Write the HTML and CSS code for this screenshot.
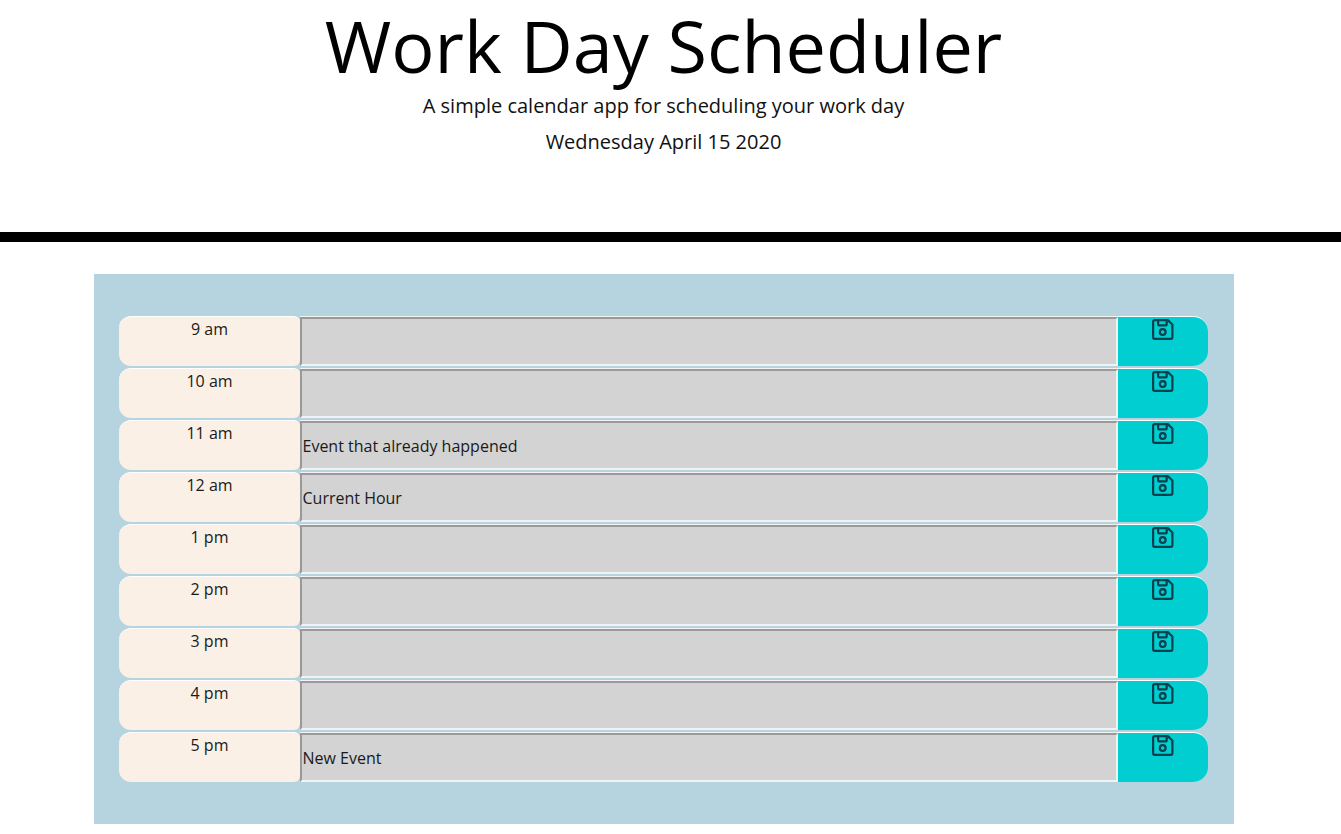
FILE: index.html
```html
<!DOCTYPE html>
<html lang="en">
<head>
<meta charset="utf-8">
<title>Work Day Scheduler</title>
<link rel="stylesheet" href="styles.css">
</head>
<body>
<svg class="defs" width="0" height="0" aria-hidden="true">
  <symbol id="save" viewBox="0 0 24 24">
    <path d="M3 4.5A1.5 1.5 0 0 1 4.5 3h12.6l4.4 4.2V19.5a1.5 1.5 0 0 1-1.5 1.5H4.5A1.5 1.5 0 0 1 3 19.5z" fill="none" stroke="currentColor" stroke-width="2.1" stroke-linejoin="round"/>
    <path d="M7.8 3v4.2a.8.8 0 0 0 .8.8h6.6a.8.8 0 0 0 .8-.8V3" fill="none" stroke="currentColor" stroke-width="2.1"/>
    <circle cx="12.2" cy="14.5" r="2.8" fill="none" stroke="currentColor" stroke-width="2.1"/>
  </symbol>
</svg>
<header class="jumbotron">
  <h1 class="title">Work Day Scheduler</h1>
  <p class="lead">A simple calendar app for scheduling your work day</p>
  <p class="lead date">Wednesday April 15 2020</p>
</header>
<main class="planner">
  <div class="row"><div class="hour">9 am</div><textarea class="event"></textarea><button class="save" aria-label="Save"><svg class="icon"><use href="#save"/></svg></button></div>
  <div class="row"><div class="hour">10 am</div><textarea class="event"></textarea><button class="save" aria-label="Save"><svg class="icon"><use href="#save"/></svg></button></div>
  <div class="row"><div class="hour">11 am</div><textarea class="event">Event that already happened</textarea><button class="save" aria-label="Save"><svg class="icon"><use href="#save"/></svg></button></div>
  <div class="row"><div class="hour">12 am</div><textarea class="event">Current Hour</textarea><button class="save" aria-label="Save"><svg class="icon"><use href="#save"/></svg></button></div>
  <div class="row"><div class="hour">1 pm</div><textarea class="event"></textarea><button class="save" aria-label="Save"><svg class="icon"><use href="#save"/></svg></button></div>
  <div class="row"><div class="hour">2 pm</div><textarea class="event"></textarea><button class="save" aria-label="Save"><svg class="icon"><use href="#save"/></svg></button></div>
  <div class="row"><div class="hour">3 pm</div><textarea class="event"></textarea><button class="save" aria-label="Save"><svg class="icon"><use href="#save"/></svg></button></div>
  <div class="row"><div class="hour">4 pm</div><textarea class="event"></textarea><button class="save" aria-label="Save"><svg class="icon"><use href="#save"/></svg></button></div>
  <div class="row"><div class="hour">5 pm</div><textarea class="event">New Event</textarea><button class="save" aria-label="Save"><svg class="icon"><use href="#save"/></svg></button></div>
</main>
</body>
</html>
```
FILE: styles.css
```css
* { box-sizing: border-box; }
html, body { margin: 0; padding: 0; }
body {
  background: #fff;
  color: #1a1a1a;
  font-family: "Open Sans", sans-serif;
  font-size: 16px;
  line-height: 24px;
}
.defs { position: absolute; }
.jumbotron {
  height: 242px;
  padding: 2px 14px 0 0;
  border-bottom: 10px solid #000;
  text-align: center;
}
.title {
  margin: 0;
  color: #000;
  font-size: 72px;
  font-weight: 400;
  line-height: 86px;
}
.lead {
  margin: 3px 0 0;
  color: #111;
  font-size: 20px;
  font-weight: 400;
  line-height: 30px;
}
.date { margin-top: 6px; }
.planner {
  width: 1140px;
  height: 550px;
  margin: 32px 0 0 94px;
  padding: 42px 26px 0 25px;
  background: #b6d4df;
}
.row {
  display: flex;
  height: 50px;
  margin-bottom: 2px;
}
.hour {
  width: 181px;
  border-top: 1px solid #fff;
  border-radius: 12px 6px 6px 12px;
  background: #faf0e6;
  text-align: center;
}
.event {
  flex: 1;
  margin: 1px 0 0;
  padding: 11px 1px 0 0.5px;
  resize: none;
  border: 2px solid;
  border-color: #999 #f2f2f2 #f2f2f2 #999;
  border-radius: 0;
  box-shadow: 0 -1px 0 #f2f2f2;
  background: #d3d3d3;
  color: #1a1a1a;
  font: inherit;
  outline: none;
  overflow: hidden;
}
.save {
  width: 90.5px;
  padding: 0;
  display: flex;
  justify-content: center;
  align-items: flex-start;
  border: 0;
  border-top: 1px solid #fff;
  border-radius: 0 15px 15px 0;
  background: #00ced1;
  color: #06404d;
}
.icon { width: 25px; height: 25px; margin-top: 0; }
```
